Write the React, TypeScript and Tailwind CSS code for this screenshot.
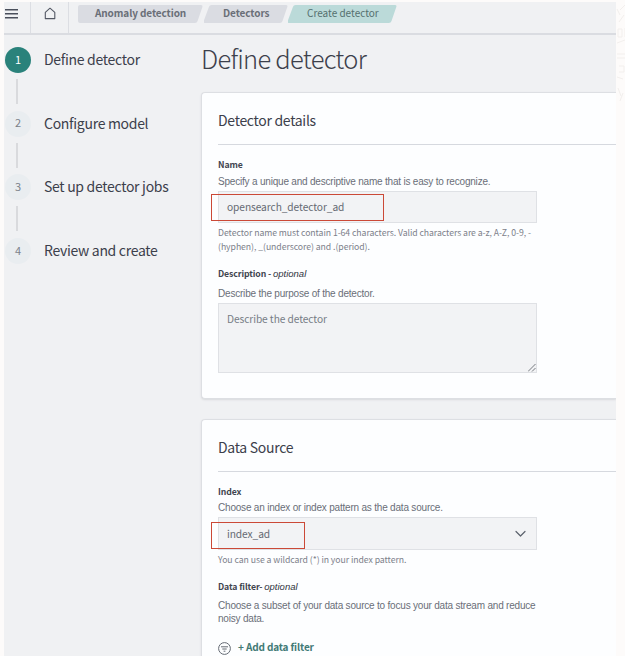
import React from "react";

const source = "font-['Noto_Sans_CJK_SC',sans-serif]";
const arial = "font-['Liberation_Sans',sans-serif]";

function Line({ className = "", children }: { className?: string; children: React.ReactNode }) {
  return (
    <div className={`whitespace-nowrap ${className}`}>
      <span>{children}</span>
    </div>
  );
}

function Header() {
  return (
    <header className="flex h-[33px] shrink-0 border-b-2 border-[#dadce1]">
      <div className="flex w-[27px] border-r border-[#dcdee3] pt-[6px]">
        <svg width="14" height="12" viewBox="0 0 14 12" className="ml-px" stroke="#4a4f5b" strokeWidth="1.6">
          <path d="M0 1.7h13M0 5.7h13M0 9.7h13" />
        </svg>
      </div>
      <div className="flex w-[38px] border-r border-[#dcdee3] pt-[5px]">
        <svg width="13" height="14" viewBox="0 0 13 14" className="ml-[13px]" fill="none" stroke="#535864" strokeWidth="1.1" strokeLinejoin="round">
          <path d="M1.3 5.4 6 1.2l4.8 4.2v6.2H1.3z" />
        </svg>
      </div>
      <nav className={`ml-[9px] mt-[3px] flex h-[18px] text-[10px] leading-[16px] tracking-[-0.1px] ${source}`}>
        <div className="grid w-[126px]">
          <svg className="col-start-1 row-start-1" width="126" height="18"><path d="M2 0h121q2 0 1.400 2l-4.800 14q-.6 2-2.600 2H2q-2 0-2-2V2q0-2 2-2z" fill="#dadce2" /></svg>
          <Line className="col-start-1 row-start-1 pl-[17px] font-bold text-[#6a6f78]">Anomaly detection</Line>
        </div>
        <div className="grid w-[84px]">
          <svg className="col-start-1 row-start-1" width="84" height="18"><path d="M7.500 0H82q2 0 1.300 2l-4.800 14q-.6 2-2.600 2H1q-2 0-1.300-2L4.900 2q.6-2 2.600-2z" fill="#dadce2" /></svg>
          <Line className="col-start-1 row-start-1 pl-[19px] font-bold text-[#6a6f78]">Detectors</Line>
        </div>
        <div className="grid w-[110px]">
          <svg className="col-start-1 row-start-1" width="110" height="18"><path d="M7.500 0H107q2 0 1.300 2l-4.800 14q-.6 2-2.600 2H1q-2 0-1.300-2L4.900 2q.6-2 2.600-2z" fill="#bbdad9" /></svg>
          <Line className="col-start-1 row-start-1 pl-[19px] tracking-normal text-[#55706f]">Create detector</Line>
        </div>
      </nav>
    </header>
  );
}

const steps = ["Define detector", "Configure model", "Set up detector jobs", "Review and create"];

function Steps() {
  return (
    <aside className={`w-[197px] shrink-0 pl-px pt-[12px] ${source}`}>
      {steps.map((label, i) => (
        <div key={label} className="h-[63.7px]">
          <div className="flex h-[26px] items-center">
            <div className={`flex size-[26px] items-center justify-center rounded-full pb-[2px] text-[11px] leading-none ${i === 0 ? "bg-[#2a827b] text-white" : "bg-[#e9edf0] text-[#7b818a]"}`}>{i + 1}</div>
            <Line className="ml-[13px] pb-[2px] text-[14px] leading-[24px] tracking-[-0.3px] text-[#3c404b]">{label}</Line>
          </div>
          {i < 3 && <div className="ml-[11px] mt-[6px] h-[25px] w-[2px] bg-[#d9dadd]" />}
        </div>
      ))}
    </aside>
  );
}

const card = "w-[415px] rounded-l-[4px] border border-r-0 border-[#dddfe3] bg-[#fdfeff] pl-4 shadow-[0_1px_2px_#d8dadd]";
const heading = `h-[52px] border-b border-[#d6d9df] pt-[14px] text-[14px] leading-[26px] tracking-[-0.3px] text-[#3c404b] ${source}`;
const label = `h-4 text-[8.700px] leading-4 font-bold tracking-[-0.1px] text-[#41454f] ${source}`;
const optional = `text-[9.500px] font-normal tracking-normal text-[#2f333d] ${arial}`;
const desc = `text-[10px] tracking-[-0.2px] text-[#6a6e78] ${arial}`;
const help = `text-[8.700px] tracking-[-0.06px] text-[#7c808a] ${source}`;
const value = `pl-[8px] text-[10.200px] tracking-[-0.08px] ${source}`;
const field = "w-[319px] border border-[#dfe1e5] bg-[#f2f3f5]";

export default function App() {
  return (
    <div className="flex h-[656px] w-[625px] overflow-hidden bg-[#fdfbfa] pl-1 pt-[2px]">
      <div className="flex h-[654px] w-[612px] shrink-0 flex-col overflow-hidden bg-[#f0f1f3]">
        <Header />
        <div className="flex">
          <Steps />
          <main className="w-[415px] shrink-0">
            <Line className={`h-[57px] pt-[3px] text-[25.500px] leading-[39px] font-light tracking-[-0.73px] text-[#3c404b] ${source}`}>Define detector</Line>

            <section className={`h-[307px] ${card}`}>
              <Line className={heading}>Detector details</Line>
              <Line className={`mt-[12px] ${label}`}>Name</Line>
              <Line className={`mt-px h-4 leading-4 ${desc}`}>Specify a unique and descriptive name that is easy to recognize.</Line>
              <div className={`relative mt-px h-8 ${field}`}>
                <Line className={`leading-[29px] text-[#656a73] ${value}`}>opensearch_detector_ad</Line>
                <div className="absolute -left-[8px] top-[2px] h-[27px] w-[173px] border border-[#cb4937]" />
              </div>
              <Line className={`mt-[3px] h-[14px] leading-[14px] ${help}`}>Detector name must contain 1-64 characters. Valid characters are a-z, A-Z, 0-9, -</Line>
              <Line className={`h-[14px] leading-[14px] ${help}`}>(hyphen), _(underscore) and .(period).</Line>
              <Line className={`mt-[12px] ${label}`}>Description - <i className={optional}>optional</i></Line>
              <Line className={`mt-[4px] h-4 leading-4 ${desc}`}>Describe the purpose of the detector.</Line>
              <div className={`mt-px flex h-[70px] ${field}`}>
                <Line className={`w-[309px] leading-[30px] text-[#777d86] ${value}`}>Describe the detector</Line>
                <svg width="8" height="8" className="mt-auto" stroke="#777b80" strokeWidth="1"><path d="M0 7.500 7.500 0M4 7.500 7.500 4" /></svg>
              </div>
            </section>

            <section className={`mt-5 h-[260px] ${card}`}>
              <Line className={heading}>Data Source</Line>
              <Line className={`mt-[12px] ${label}`}>Index</Line>
              <Line className={`h-4 leading-4 ${desc}`}>Choose an index or index pattern as the data source.</Line>
              <div className={`relative mt-px flex h-[33px] ${field}`}>
                <Line className={`w-[296px] leading-[31px] text-[#656a73] ${value}`}>index_ad</Line>
                <svg width="11" height="8" className="mt-[12px]" fill="none" stroke="#5c626d" strokeWidth="1.2" strokeLinecap="round" strokeLinejoin="round"><path d="M1 1.500 5.500 6 10 1.500" /></svg>
                <div className="absolute -left-[8px] top-[4px] h-[27px] w-[94px] border border-[#cb4937]" />
              </div>
              <Line className={`mt-[2px] h-4 leading-4 ${help}`}>You can use a wildcard (*) in your index pattern.</Line>
              <Line className={`mt-[11px] ${label}`}>Data filter- <i className={optional}>optional</i></Line>
              <Line className={`mt-[4px] h-[13px] leading-[13px] ${desc}`}>Choose a subset of your data source to focus your data stream and reduce</Line>
              <Line className={`h-[14px] leading-[14px] ${desc}`}>noisy data.</Line>
              <div className="mt-[12px] flex h-[18px] items-center">
                <svg width="13" height="13" className="mt-[3px]" fill="none" stroke="#646a73"><circle cx="6.500" cy="6.500" r="5.900" /><path d="M3 4.800h7M4.300 7h4.400M5.600 9.200h1.800" /></svg>
                <Line className={`ml-[7px] text-[10px] leading-[18px] font-bold tracking-[-0.14px] text-[#427a76] ${source}`}>+ Add data filter</Line>
              </div>
            </section>
          </main>
        </div>
      </div>
      <svg width="9" height="110" className="shrink-0" fill="none" stroke="#f2efed">
        <path d="M1 7l3 6M9 3L4 8M8 13l-5 7M2 27v8h4v-8zM9 26v9M1 41l8-3M1 52h8M1 56h8M3 64h5v6H3M1 75l6 2M2 86l3 8M7 91l-3 8" />
      </svg>
    </div>
  );
}
